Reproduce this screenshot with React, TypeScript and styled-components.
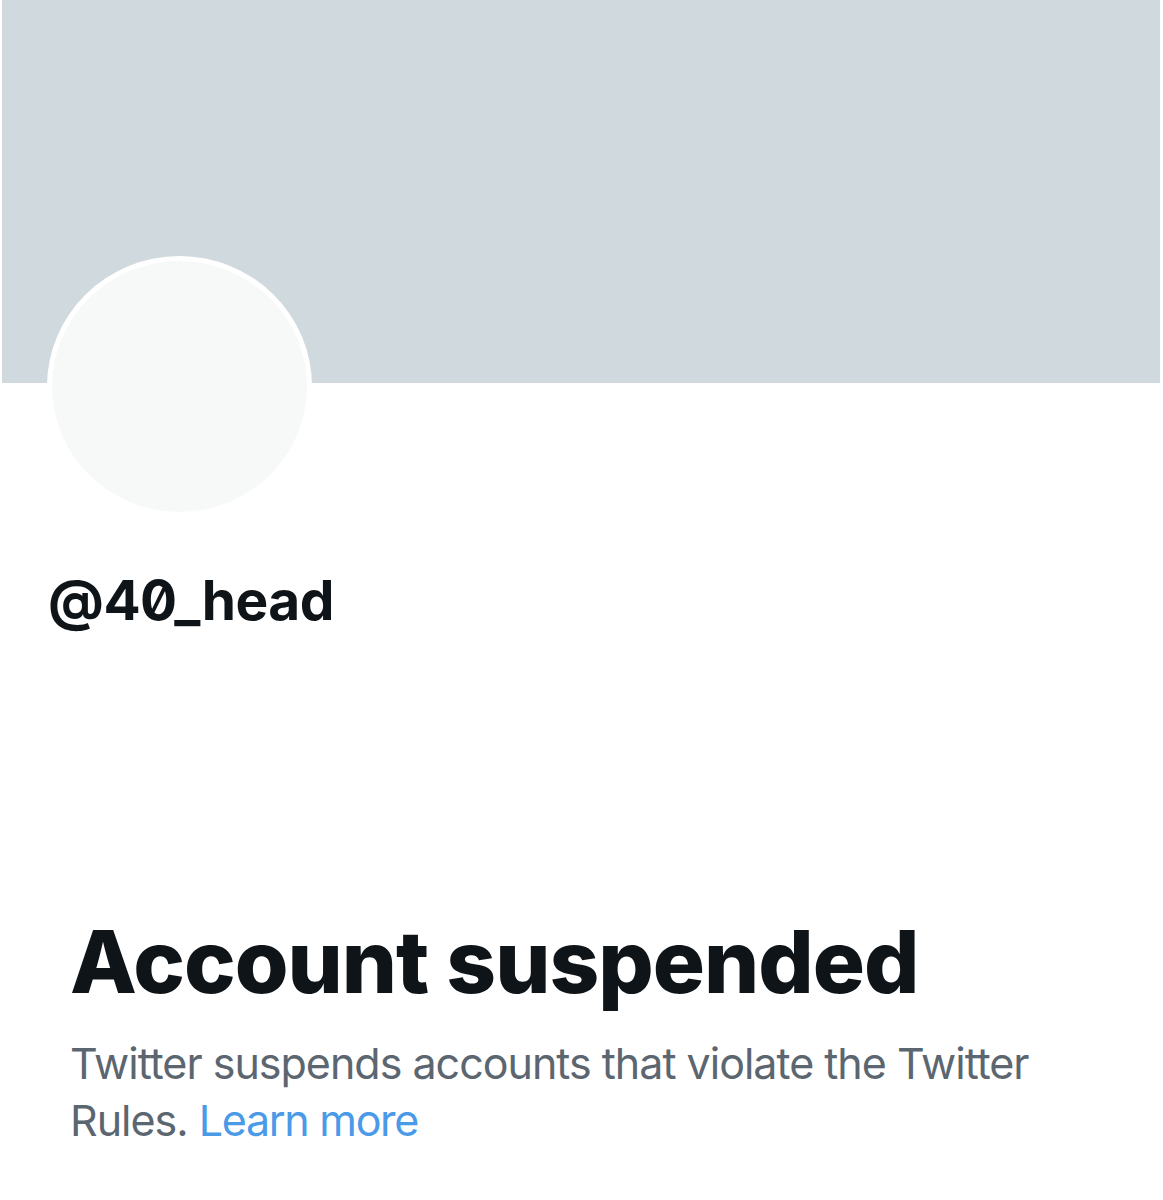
import React from "react";
import styled, { createGlobalStyle } from "styled-components";

const GlobalStyle = createGlobalStyle`
  html, body {
    margin: 0;
    padding: 0;
    background: #ffffff;
  }
  body {
    font-family: Inter, "Noto Sans", "Liberation Sans", sans-serif;
    -webkit-font-smoothing: antialiased;
  }
`;

const Page = styled.div`
  width: 1163px;
  min-height: 1200px;
  background: #ffffff;
`;

const Banner = styled.div`
  margin-left: 2px;
  width: 1158px;
  height: 383px;
  background: #cfd9de;
`;

const Avatar = styled.div`
  margin: -127px 0 0 47px;
  width: 265px;
  height: 261px;
  box-sizing: border-box;
  border-radius: 50%;
  border: 5px solid #ffffff;
  background: #f7f9f9;
  position: relative;
`;

const Handle = styled.div`
  margin: 50px 0 0 48px;
  font-size: 55px;
  line-height: 1.2;
  font-weight: 700;
  color: #0f1419;
  font-feature-settings: "zero" 1;
  letter-spacing: -0.5px;
`;

const Notice = styled.section`
  margin: 277px 0 0 70px;
  width: 1000px;
`;

const Title = styled.h1`
  margin: 0;
  font-size: 87px;
  line-height: 1.2;
  font-weight: 800;
  color: #0f1419;
  letter-spacing: -1px;
`;

const Body = styled.p`
  margin: 21px 0 0;
  font-size: 43px;
  line-height: 57px;
  font-weight: 400;
  color: #5b6670;
  letter-spacing: -1px;
`;

const Link = styled.a`
  color: #4a9ae8;
  text-decoration: none;
  letter-spacing: -1.3px;
`;

export default function App() {
  return (
    <Page>
      <GlobalStyle />
      <Banner />
      <Avatar />
      <Handle>@40_head</Handle>
      <Notice>
        <Title>Account suspended</Title>
        <Body>
          Twitter suspends accounts that violate the Twitter Rules.{" "}
          <Link href="#">Learn more</Link>
        </Body>
      </Notice>
    </Page>
  );
}
